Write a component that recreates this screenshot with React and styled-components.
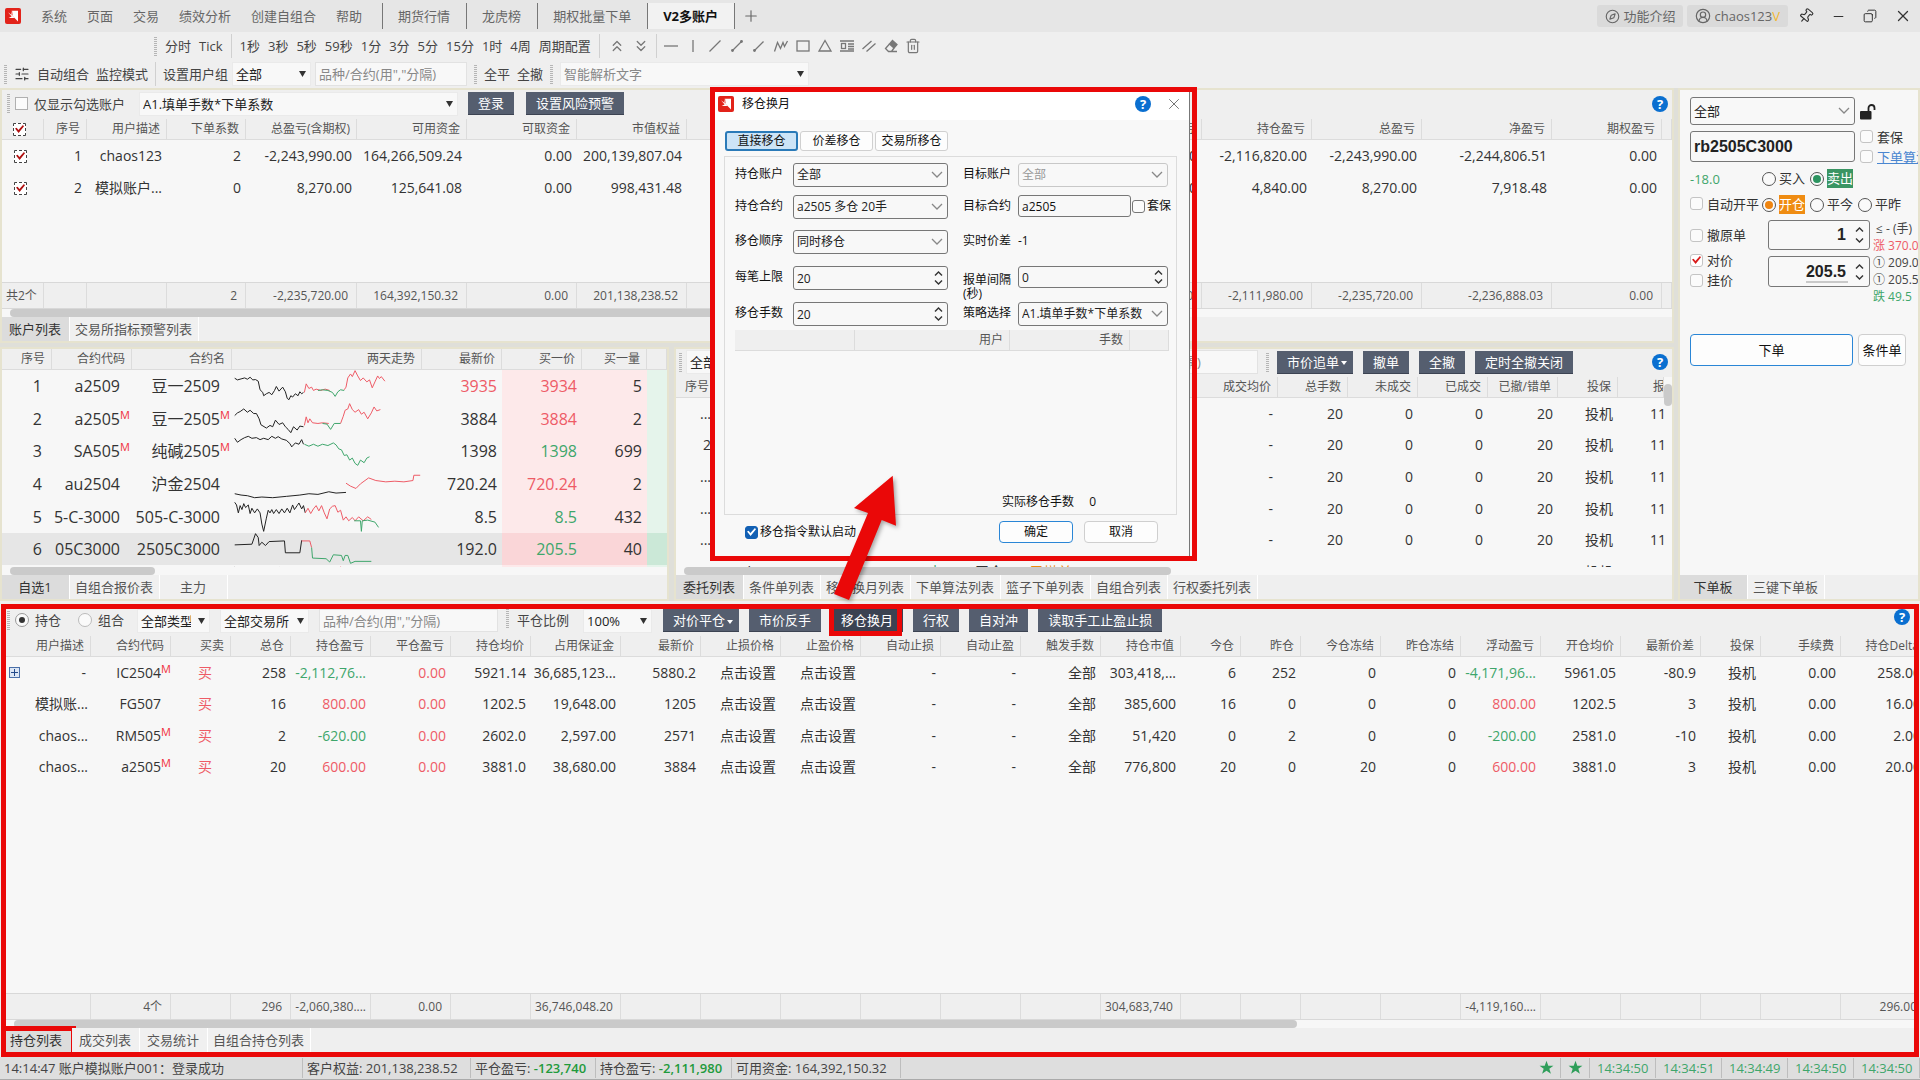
import React from "react";
import styled, { createGlobalStyle, css } from "styled-components";
import { Compass, CircleUserRound, Pin, Minus, Copy, X, Plus, ChevronsUp, ChevronsDown, Trash2, Eraser, SlidersHorizontal } from "lucide-react";

const sans = '"Open Sans", "Noto Sans CJK SC", sans-serif';
const red = "#ea0808";
const up = "#ee5b66";
const down = "#3ea66b";

const Global = createGlobalStyle`
  *, *::before, *::after { box-sizing: border-box; }
  body { margin: 0; background: #efefef; overflow: hidden; }
  button, input, select { font: inherit; color: inherit; margin: 0; }
`;

const App_ = styled.div`
  display: flex;
  flex-direction: column;
  height: 100vh;
  position: relative;
  overflow: hidden;
  font: 13px/18px ${sans};
  color: #444;
  background: #efefef;
`;

/* ---------- title bar and tool bars ---------- */
const TitleBar = styled.header`
  display: flex;
  align-items: center;
  height: 32px;
  flex: none;
  padding: 0 8px 0 5px;
  background: #e6e6e6;
  color: #666;
  white-space: nowrap;
`;
const Menu = styled.nav`
  display: flex;
  gap: 20px;
  margin: 0 20px 0 20px;
`;
const PlainButton = styled.button`
  display: inline-flex;
  align-items: center;
  border: 0;
  padding: 0;
  background: none;
  white-space: nowrap;
`;
const PageTab = styled.button`
  height: 26px;
  border: 0;
  border-left: 1px solid #777;
  padding: 0 16px 0 15px;
  background: ${(p) => (p.$active ? "#f2f2f2" : "none")};
  color: ${(p) => (p.$active ? "#111" : "#666")};
  font-weight: ${(p) => (p.$active ? 700 : 400)};
  ${(p) => p.$active && "border-right: 1px solid #777;"}
`;
const Spacer = styled.div`
  flex: 1;
`;
const Chip = styled.button`
  display: flex;
  align-items: center;
  gap: 3px;
  height: 22px;
  margin-right: 4px;
  padding: 0 8px;
  border: 0;
  border-radius: 3px;
  background: #dadada;
  white-space: nowrap;
  b { color: #f2b630; font-weight: 400; }
`;
const WindowButtons = styled.div`
  display: flex;
  gap: 17px;
  margin-left: 6px;
  color: #333;
`;
const ToolBar = styled.div`
  display: flex;
  align-items: center;
  flex: none;
  height: 28px;
  gap: ${(p) => p.$gap || 8}px;
  padding: 0 4px 0 ${(p) => p.$left || 4}px;
  white-space: nowrap;
`;
const Pair = styled.div`
  display: flex;
  align-items: center;
  gap: ${(p) => p.$gap}px;
`;
const Grip = styled.i`
  width: 3px;
  height: 19px;
  flex: none;
  background: repeating-linear-gradient(#b5b5b5 0 1px, transparent 1px 2px);
`;
const Rule = styled.i`
  width: 1px;
  height: 24px;
  flex: none;
  background: #d0d0d0;
`;
const DrawIcons = styled.div`
  display: flex;
  gap: 6px;
  color: #777;
  svg { display: block; }
`;

/* ---------- controls ---------- */
const SelectBox = styled.span`
  display: inline-grid;
  align-items: center;
  flex: none;
  width: ${(p) => p.$w}px;
  max-width: 100%;
  height: ${(p) => p.$h || 24}px;
  color: ${(p) => (p.$off ? "#999" : "#222")};
  select, svg { grid-area: 1 / 1; }
  svg { justify-self: end; margin-right: 5px; pointer-events: none; }
  select {
    appearance: none;
    width: 100%;
    height: 100%;
    padding: 0 18px 0 3px;
    border: 1px solid ${(p) => (p.$form ? (p.$off ? "#c8c8c8" : "#777") : "#eaeaea")};
    border-radius: ${(p) => (p.$form ? 3 : 0)}px;
    background: #f8f8f8;
    color: ${(p) => (p.$faint ? "#888" : "inherit")};
    opacity: 1;
  }
`;
function Select({ label, value, w, h, form, off, faint }) {
  return (
    <SelectBox $w={w} $h={h} $form={form} $off={off} $faint={faint}>
      <select aria-label={label} disabled={off} defaultValue={value}>
        <option>{value}</option>
      </select>
      {form ? (
        <svg width="12" height="8" viewBox="0 0 12 8" fill="none" stroke="#888" strokeWidth="1.3"><path d="M1 1l5 5 5-5" /></svg>
      ) : (
        <svg width="7" height="6" viewBox="0 0 7 6" fill="#333"><path d="M0 0h7L3.5 6z" /></svg>
      )}
    </SelectBox>
  );
}
const TextInput = styled.input`
  width: ${(p) => p.$w}px;
  height: ${(p) => p.$h || 24}px;
  flex: none;
  padding: 0 3px;
  border: 1px solid ${(p) => (p.$form ? "#777" : "#e2e2e2")};
  border-radius: ${(p) => (p.$form ? 3 : 0)}px;
  background: #f8f8f8;
  outline: 0;
  &::placeholder { color: #888; opacity: 1; }
`;
const FilterInput = styled(TextInput)`
  padding-right: 56px;
  text-align: right;
`;
const BigInput = styled(TextInput)`
  color: #222;
  font: bold 16px/20px "Liberation Sans", sans-serif;
`;
const Label = styled.label`
  display: inline-flex;
  align-items: center;
  gap: ${(p) => p.$gap || 4}px;
  white-space: nowrap;
`;
const Box = styled.input.attrs({ type: "checkbox" })`
  appearance: none;
  display: grid;
  place-items: center;
  flex: none;
  width: 13px;
  height: 13px;
  border: 1px solid ${(p) => p.$edge || "#c4c4c4"};
  border-radius: ${(p) => (p.$square ? 0 : 3)}px;
  background: #fbfbfb;
  &:checked { background: ${(p) => p.$fill || "#fff"}; }
  &:checked::before {
    content: "";
    width: 9px;
    height: 9px;
    background: ${(p) => p.$tick || "#d91c1c"};
    clip-path: polygon(0 45%, 18% 35%, 38% 62%, 88% 5%, 100% 20%, 40% 95%);
  }
`;
const GridBox = styled(Box)`
  margin: 0 auto;
  border: 1px dashed #444;
  border-radius: 1px;
  &:checked::before { background: #b01010; }
`;
const Radio = styled.input.attrs({ type: "radio" })`
  appearance: none;
  display: grid;
  place-items: center;
  flex: none;
  width: 14px;
  height: 14px;
  border: 1px solid ${(p) => p.$edge || "#555"};
  border-radius: 50%;
  background: #fafafa;
  &:checked::before {
    content: "";
    width: ${(p) => p.$dot || 8}px;
    height: ${(p) => p.$dot || 8}px;
    border-radius: 50%;
    background: ${(p) => p.$c || "#333"};
  }
`;
const DarkButton = styled.button`
  position: relative;
  height: 23px;
  flex: none;
  padding: 0 ${(p) => (p.$menu ? 6 : 10)}px 0 10px;
  border: 0;
  border-bottom: 1px solid #3c4352;
  background: ${(p) => (p.$on ? "#3b4252" : "#555e6f")};
  color: #fff;
  line-height: 20px;
  white-space: nowrap;
  svg { margin-left: 2px; vertical-align: middle; }
  & + & { margin-left: 2px; }
`;
const Caret = () => (
  <svg width="6" height="4" viewBox="0 0 6 4" fill="#fff"><path d="M0 0h6L3 4z" /></svg>
);
const HelpButton = styled.button`
  width: 16px;
  height: 16px;
  flex: none;
  border: 0;
  border-radius: 50%;
  padding: 0;
  background: #0a6fd0;
  color: #fff;
  font: bold 13px/16px ${sans};
`;
const Help = () => <HelpButton aria-label="help">?</HelpButton>;

const SpinBox = styled.span`
  display: inline-grid;
  align-items: center;
  width: ${(p) => p.$w}px;
  height: ${(p) => p.$h}px;
  input, svg { grid-area: 1 / 1; }
  svg { justify-self: end; margin-right: ${(p) => (p.$big ? 6 : 5)}px; }
  input {
    appearance: textfield;
    width: 100%;
    height: 100%;
    border: 1px solid #777;
    border-radius: 3px;
    background: #f8f8f8;
    padding: 0 3px;
    color: #222;
    outline: 0;
  }
  input::-webkit-inner-spin-button { display: none; }
  ${(p) => p.$big && css`
    input { padding-right: 23px; text-align: right; font: bold 16px/20px "Liberation Sans", sans-serif; }
  `}
  ${(p) => p.$mark && css`
    input { background: linear-gradient(#c9c9c9, #c9c9c9) 37px 24px / 42px 2px no-repeat #f8f8f8; }
  `}
`;
function Spin({ id, label, value, w, h, big, mark }) {
  const g = big ? 16 : 14;
  return (
    <SpinBox $w={w} $h={h} $big={big} $mark={mark}>
      <input id={id} type="number" step="any" aria-label={label} defaultValue={value} />
      <svg width="9" height={g} viewBox={`0 0 9 ${g}`} fill="none" stroke="#333" strokeWidth="1.4">
        <path d={`M1 4.5l3.5-3.5 3.5 3.5M1 ${g - 4.5}l3.5 3.5 3.5-3.5`} />
      </svg>
    </SpinBox>
  );
}

function Logo({ size }) {
  return (
    <svg width={size} height={size} viewBox="0 0 16 16" aria-hidden="true">
      <rect width="16" height="16" rx="2" fill="#e2231a" />
      <path d="M6.6 2.8H13v10.6L9.6 10 6 6.6z" fill="#fff" />
      <path d="M3 4.2l3 2.4 3.6 3.4H3.6l3-1.4z" fill="#fff" />
      <path d="M6.6 2.8l.6 4.4" stroke="#e2231a" strokeWidth=".8" />
    </svg>
  );
}

/* ---------- panels and tables ---------- */
const Workspace = styled.div`
  display: grid;
  grid-template-columns: minmax(0, 1fr) 242px;
  grid-template-rows: minmax(0, 1fr);
  gap: 4px;
  flex: none;
  height: 513px;
  background: #dfdfd9;
`;
const LeftSide = styled.div`
  display: grid;
  grid-template-columns: minmax(0, 1fr);
  grid-template-rows: 255px minmax(0, 1fr);
  gap: 4px;
  min-width: 0;
`;
const Split = styled.div`
  display: grid;
  grid-template-columns: 669px minmax(0, 1fr);
  grid-template-rows: minmax(0, 1fr);
  gap: 5px;
  min-width: 0;
  min-height: 0;
`;
const Panel = styled.section`
  display: flex;
  flex-direction: column;
  min-width: 0;
  min-height: 0;
  overflow: hidden;
  border: 2px solid #e6e3cf;
  background: #f7f7f7;
`;
const PanelBar = styled(ToolBar)`
  height: ${(p) => p.$h || 28}px;
  padding-bottom: 2px;
  background: #efefef;
`;
const Body = styled.div`
  flex: 1;
  min-height: 0;
  overflow: hidden;
`;
const Table = styled.table`
  width: 100%;
  height: ${(p) => (p.$h ? `${p.$h}px` : "auto")};
  table-layout: fixed;
  border-collapse: separate;
  border-spacing: 0;
  color: #333;
  font-size: ${(p) => p.$size || 14}px;
  line-height: 20px;
`;
const Th = styled.th`
  height: 21px;
  overflow: hidden;
  padding: 0 6px 0 0;
  border-right: 1px solid #dcdcdc;
  border-bottom: 1px solid #dcdcdc;
  background: #efefef;
  color: #555;
  font-size: 12px;
  font-weight: 400;
  line-height: 16px;
  text-align: right;
  white-space: nowrap;
`;
const LeftTh = styled(Th)`
  padding-left: 35px;
  text-align: left;
`;
const Td = styled.td`
  overflow: hidden;
  padding: 0 ${(p) => p.$pad ?? 5}px 0 0;
  background: ${(p) => p.$bg || "none"};
  color: ${(p) => p.$c || "inherit"};
  text-align: ${(p) => p.$align || "right"};
  white-space: nowrap;
`;
const FootTd = styled.td`
  height: 25px;
  padding: 0 ${(p) => (p.$tight ? 4 : 8)}px 0 ${(p) => (p.$tight ? 0 : 4)}px;
  border-right: 1px solid #dcdcdc;
  color: #555;
  font-size: 12px;
  text-align: ${(p) => p.$align || "right"};
  white-space: nowrap;
`;
const Foot = styled.div`
  flex: none;
  overflow: hidden;
  border-top: 1px solid #d8d8d8;
  border-bottom: 1px solid #d8d8d8;
  background: #efefef;
`;
const Cols = ({ widths }) => (
  <colgroup>{widths.map((w, i) => <col key={i} style={w ? { width: w } : undefined} />)}</colgroup>
);
const Clip = styled.div`
  display: flex;
  justify-content: flex-end;
  overflow: hidden;
  span { flex: none; }
`;
const Sup = styled.sup`
  flex: none;
  width: 10px;
  color: #f03040;
  font-size: 11px;
  line-height: 12px;
  text-align: center;
`;
const Code = ({ text, main }) => (
  <Clip><span>{text}</span><Sup>{main ? "M" : ""}</Sup></Clip>
);
const HScroll = styled.div`
  flex: none;
  height: 8px;
  padding-left: 8px;
  &::before {
    content: "";
    display: block;
    width: ${(p) => p.$w};
    height: 100%;
    border-radius: 4px;
    background: #cacaca;
  }
`;
const Tabs = styled.div`
  display: flex;
  flex: none;
  height: 24px;
  background: #efefef;
`;
const Tab = styled.button`
  position: relative;
  min-width: 68px;
  flex: none;
  padding: 0 6px 0 5px;
  border: 0;
  border-right: 1px solid #fff;
  background: ${(p) => (p.$on ? "#dcdcdc" : "#f0f0f0")};
  color: ${(p) => (p.$on ? "#333" : "#555")};
  white-space: nowrap;
`;
const MarkedTab = styled(Tab)`
  min-width: 66px;
  padding-left: 4px;
  text-align: left;
`;
const TabMark = styled.i`
  position: absolute;
  inset: -2px -5px -5px -5px;
  border: 5px solid ${red};
  pointer-events: none;
`;
const ButtonMark = styled.i`
  position: absolute;
  inset: -5px 1px -5px -2px;
  border: 5px solid ${red};
  pointer-events: none;
`;
const TabRow = ({ items, mark }) => (
  <Tabs>
    {items.map((t, i) =>
      mark && i === 0 ? <MarkedTab key={t} $on>{t}<TabMark /></MarkedTab> : <Tab key={t} $on={i === 0}>{t}</Tab>
    )}
  </Tabs>
);

/* ---------- accounts ---------- */
const accCols = [42, 43, 80, 79, 111, 110, 110, 110, 119, 99, 99, 99, 99, 110, 110, 130, 110, null];
const accHead = ["", "序号", "用户描述", "下单系数", "总盈亏(含期权)", "可用资金", "可取资金", "市值权益", "占用保证金", "", "", "", "平仓盈亏", "持仓盈亏", "总盈亏", "净盈亏", "期权盈亏", ""];
const accRows = [
  ["1", "chaos123", "2", "-2,243,990.00", "164,266,509.24", "0.00", "200,139,807.04", "36,685,123.00", "", "", "", "0.00", "-2,116,820.00", "-2,243,990.00", "-2,244,806.51", "0.00", ""],
  ["2", "模拟账户...", "0", "8,270.00", "125,641.08", "0.00", "998,431.48", "", "", "", "", "0.00", "4,840.00", "8,270.00", "7,918.48", "0.00", ""],
];
const accFoot = ["共2个", "", "", "2", "-2,235,720.00", "164,392,150.32", "0.00", "201,138,238.52", "", "", "", "", "0.00", "-2,111,980.00", "-2,235,720.00", "-2,236,888.03", "0.00", ""];

const Gap4 = styled.div`
  margin-right: 4px;
`;
function Accounts() {
  return (
    <Panel>
      <PanelBar $left={5} $gap={10} $h={29}>
        <Gap4>
          <Pair $gap={5}><Grip /><Label $gap={6}><Box $square $edge="#b0b0b0" />仅显示勾选账户</Label></Pair>
        </Gap4>
        <Select label="策略" value="A1.填单手数*下单系数" w={319} />
        <DarkButton>登录</DarkButton>
        <DarkButton>设置风险预警</DarkButton>
        <Spacer />
        <Help />
      </PanelBar>
      <Body>
        <Table $h={85}>
          <Cols widths={accCols} />
          <thead>
            <tr>{accHead.map((h, i) => <Th key={i}>{i === 0 ? <GridBox aria-label="全选" defaultChecked /> : h}</Th>)}</tr>
          </thead>
          <tbody>
            {accRows.map((r) => (
              <tr key={r[0]}>
                <Td><GridBox aria-label={`选择 ${r[1]}`} defaultChecked /></Td>
                {r.map((c, i) => <Td key={i}>{c}</Td>)}
              </tr>
            ))}
          </tbody>
        </Table>
      </Body>
      <Foot>
        <Table>
          <Cols widths={accCols} />
          <tbody><tr>{accFoot.map((c, i) => <FootTd key={i} $align={i === 0 ? "left" : "right"}>{c}</FootTd>)}</tr></tbody>
        </Table>
      </Foot>
      <HScroll $w="1130px" />
      <TabRow items={["账户列表", "交易所指标预警列表"]} />
    </Panel>
  );
}

/* ---------- watch list ---------- */
const K = "#222";
const watchCols = [50, 80, 100, 190, 80, 80, 65, null];
const watchRows = [
  { code: "a2509", name: "豆一2509", last: "3935", lc: up, bid: "3934", bc: up, vol: "5", lines: [
    [K, "6,25 12,30 20,27 28,24 34,28 40,22 46,30 52,29 58,34 62,60 68,68 70,78 76,72 82,68 88,75 94,62 98,50 104,64 112,52 118,66 122,86 126,90 130,78 134,82 140,72 146,78 150,66 154,72 158,68"],
    [up, "160,68 164,42 170,56 176,52 180,62 186,58 196,62 206,58 216,62"], [down, "190,62 200,60 212,62 222,68 228,80 234,66 240,60 248,62"],
    [up, "248,60 252,52 256,24 262,12 266,20 272,2 278,18 284,32 290,24 298,36 304,30 310,54 316,36 322,18 326,26 330,20 338,34"]] },
  { code: "a2505", m: true, name: "豆一2505", last: "3884", bid: "3884", bc: up, vol: "2", lines: [
    [K, "6,38 12,30 18,26 26,18 34,28 40,22 48,32 54,32 60,48 64,66 76,76 84,68 90,72 96,52 104,65 112,60 118,72 124,80 130,90 136,72 144,82 150,70 158,72"],
    [up, "160,68 164,42 168,60 172,48 178,60 190,62 200,60 214,62"], [down, "200,62 210,64 218,80 226,62 240,62"],
    [up, "240,62 246,40 250,22 256,18 260,2 266,20 272,28 280,20 286,34 292,28 300,48 308,30 314,12 320,24 328,20"]] },
  { code: "SA505", m: true, name: "纯碱2505", last: "1398", bid: "1398", bc: down, vol: "699", lines: [
    [K, "6,10 12,22 20,14 28,8 36,4 44,10 54,8 62,14 70,10 80,14 88,4 96,10 102,5 110,12 120,16 128,26 132,36 140,24 148,28 154,14 158,28"],
    [down, "160,28 170,34 180,28 190,34 200,28 212,32 224,24 230,30 236,42 242,45 248,62 254,60 260,76 266,70 272,86 278,92 284,76 292,84 298,70 304,66"]] },
  { code: "au2504", name: "沪金2504", last: "720.24", bid: "720.24", bc: up, vol: "2", lines: [
    [K, "6,78 20,82 34,84 50,90 66,88 90,90 120,86 150,82 170,78 190,80 214,72 230,76 252,74"],
    [up, "252,46 262,55 274,62 284,48 302,30 318,38 340,42 360,40 380,42 400,38 402,22 416,22"]] },
  { code: "5-C-3000", name: "505-C-3000", last: "8.5", bid: "8.5", bc: down, vol: "432", lines: [
    [K, "6,4 10,12 14,36 18,14 22,26 26,8 30,20 36,12 40,38 44,22 50,36 56,24 62,36 66,70 70,92 76,52 80,28 84,36 88,26 92,38 98,26 104,38 110,24 116,36 122,22 128,36 134,12 138,26 144,14 148,6 154,24 158,14 162,36"],
    [up, "162,36 168,22 174,38 180,24 186,14 192,30 198,14 204,36 210,54 216,24 222,16 228,14 234,34 240,28 246,58 252,48 258,60 266,50 272,60 280,48 290,60 300,48 308,56"],
    [down, "270,60 284,60 286,92 288,60 300,58 316,64 324,80"]] },
  { code: "05C3000", name: "2505C3000", last: "192.0", bid: "205.5", bc: down, vol: "40", on: true, lines: [
    [K, "6,36 44,34 48,18 52,2 58,14 60,38 66,28 74,38 82,26 116,24 118,60 150,60 154,22"],
    [up, "154,24 172,24 176,44"], [down, "176,44 178,76 208,78 216,88 224,66 242,68 246,84 250,68 256,68 262,92 272,86 308,86"]] },
  { code: "", name: "", last: "", bid: "", vol: "", lines: [[K, "6,4 8,6"], [K, "106,4 108,6"], [up, "240,2 240,8"]] },
];
const Spark = styled.svg`
  display: block;
  width: 100%;
  height: 32px;
  fill: none;
`;
const WatchRow = styled.tr`
  background: ${(p) => (p.$on ? "#e6e6e6" : "none")};
`;
function WatchList() {
  return (
    <Panel>
      <Body>
        <Table $h={249} $size={16}>
          <Cols widths={watchCols} />
          <thead><tr>{["序号", "合约代码", "合约名", "两天走势", "最新价", "买一价", "买一量", ""].map((h) => <Th key={h}>{h}</Th>)}</tr></thead>
          <tbody>
            {watchRows.map((r, i) => (
              <WatchRow key={i} $on={r.on}>
                <Td $pad={10}>{r.code && i + 1}</Td>
                <Td $pad={2}><Code text={r.code} main={r.m} /></Td>
                <Td $pad={2}><Code text={r.name} main={r.m} /></Td>
                <Td $pad={0}>
                  <Spark viewBox="0 0 420 97" preserveAspectRatio="none">
                    {r.lines.map(([c, pts], k) => <polyline key={k} points={pts} stroke={c} vectorEffect="non-scaling-stroke" />)}
                  </Spark>
                </Td>
                <Td $c={r.lc}>{r.last}</Td>
                <Td $c={r.bc} $bg={r.on ? "#fad6d8" : "#fde9ea"}>{r.bid}</Td>
                <Td $bg={r.on ? "#fad6d8" : "#fde9ea"}>{r.vol}</Td>
                <Td $bg={r.on ? "#cbe8d7" : "#e5f4eb"} />
              </WatchRow>
            ))}
          </tbody>
        </Table>
      </Body>
      <HScroll $w="145px" />
      <TabRow items={["自选1", "自组合报价表", "主力"]} />
    </Panel>
  );
}

/* ---------- orders ---------- */
const orderCols = [40, 92, 82, 60, 58, 72, 88, 110, 70, 70, 70, 70, 60, null];
const orderHead = ["序号", "", "", "", "", "", "", "成交均价", "总手数", "未成交", "已成交", "已撤/错单", "投保", "报单时间"];
const orderTail = ["-", "20", "0", "0", "20", "投机", "11:26:30"];
const orderRows = [
  { n: "..." }, { n: "2" }, { n: "..." }, { n: "..." }, { n: "..." },
  { n: "8", user: "chaos123", code: "a2505", side: "卖", open: "平仓", state: "已撤单", price: "4001" },
];
const OrderArea = styled.div`
  display: flex;
  flex: 1;
  min-height: 0;
`;
const VScroll = styled.div`
  width: 8px;
  padding-top: 7px;
  &::before {
    content: "";
    display: block;
    height: 22px;
    border-radius: 4px;
    background: #cacaca;
  }
`;
const Indent = styled.span`
  padding-left: 32px;
`;
const OrderHelp = styled.div`
  display: flex;
  justify-content: flex-end;
  width: 87px;
`;
function Orders() {
  return (
    <Panel>
      <PanelBar $left={3} $gap={8}>
        <Pair $gap={4}>
          <Grip />
          <Select label="委托筛选" value="全部" w={90} />
        </Pair>
        <Spacer />
        <FilterInput $w={180} aria-label="委托合约筛选" placeholder={'品种/合约(用","分隔)'} />
        <Grip />
        <DarkButton $menu>市价追单<Caret /></DarkButton>
        <DarkButton>撤单</DarkButton>
        <DarkButton>全撤</DarkButton>
        <DarkButton>定时全撤关闭</DarkButton>
        <OrderHelp><Help /></OrderHelp>
      </PanelBar>
      <OrderArea>
        <Body>
          <Table $h={211}>
            <Cols widths={orderCols} />
            <thead><tr>{orderHead.map((h, i) => (i === 13 ? <LeftTh key={i}>{h}</LeftTh> : <Th key={i}>{h}</Th>))}</tr></thead>
            <tbody>
              {orderRows.map((r, i) => (
                <tr key={i}>
                  <Td>{r.n}</Td>
                  <Td>{r.user}</Td>
                  <Td>{r.code}</Td>
                  <Td $c={down} $pad={8}>{r.side}</Td>
                  <Td>{r.open}</Td>
                  <Td $c="#ee8a10" $pad={8}>{r.state}</Td>
                  <Td>{r.price}</Td>
                  {orderTail.map((c, k) => (
                    <Td key={k} $align={k === 6 ? "left" : "right"}>{k === 6 ? <Indent>{c}</Indent> : c}</Td>
                  ))}
                </tr>
              ))}
            </tbody>
          </Table>
        </Body>
        <VScroll />
      </OrderArea>
      <HScroll $w="487px" />
      <TabRow items={["委托列表", "条件单列表", "移仓换月列表", "下单算法列表", "篮子下单列表", "自组合列表", "行权委托列表"]} />
    </Panel>
  );
}

/* ---------- order entry ---------- */
const Entry = styled.form`
  display: flex;
  flex-direction: column;
  flex: 1;
  min-height: 0;
  overflow: hidden;
  padding: 7px 0 0 10px;
  color: #333;
`;
const Line = styled.div`
  display: flex;
  align-items: center;
  flex: none;
  gap: 5px;
  height: ${(p) => (p.$h ? `${p.$h}px` : "auto")};
  margin-bottom: ${(p) => p.$mb ?? 7}px;
  white-space: nowrap;
`;
const Stack = styled.div`
  display: flex;
  flex-direction: column;
  gap: ${(p) => p.$gap || 0}px;
`;
const First = styled.div`
  width: 72px;
  flex: none;
  color: ${(p) => p.$c || "inherit"};
`;
const Option = styled.label`
  display: flex;
  align-items: center;
  gap: 3px;
  width: 48px;
  flex: none;
  span {
    line-height: 19px;
    background: ${(p) => p.$bg || "none"};
    color: ${(p) => (p.$bg ? "#fff" : "inherit")};
  }
`;
const OptionLine = styled(Line)`
  gap: 0;
  height: 19px;
`;
const Grid3 = styled.div`
  display: grid;
  grid-template-columns: 78px 102px minmax(0, 1fr);
  margin-bottom: 29px;
  white-space: nowrap;
`;
const CheckLine = styled(Label)`
  height: ${(p) => p.$h}px;
`;
const Quotes = styled.div`
  padding-left: 3px;
  font-size: 12px;
  line-height: 17px;
  div { color: #444; }
  div:nth-child(2) { color: ${up}; }
  div:nth-child(5) { color: ${down}; }
`;
const FormButton = styled.button`
  width: ${(p) => p.$w}px;
  height: ${(p) => p.$h}px;
  flex: none;
  padding: 0;
  border: 1px solid ${(p) => (p.$main ? "#2a86d6" : "#cfcfcf")};
  border-radius: 4px;
  background: #fdfdfd;
  color: #111;
`;
const Link = styled.a`
  color: #4a86d0;
`;
function OrderEntry() {
  return (
    <Panel>
      <Entry>
        <Line $mb={6}>
          <Select form label="账户" value="全部" w={165} h={28} />
          <svg width="16" height="17" viewBox="0 0 16 17"><rect x="0" y="8" width="11.500" height="8.500" rx="1" fill="#222" /><path d="M8.500 8.500V5a3 3 0 0 1 6 0v2" fill="none" stroke="#222" strokeWidth="1.800" /></svg>
        </Line>
        <Line $h={31}>
          <BigInput $form $w={165} $h={31} aria-label="合约" defaultValue="rb2505C3000" />
          <Stack $gap={2}>
            <Label><Box />套保</Label>
            <Label><Box aria-label="下单算法" /><Link href="#algo">下单算法</Link></Label>
          </Stack>
        </Line>
        <OptionLine>
          <First $c={down}>-18.0</First>
          <Option><Radio name="side" /><span>买入</span></Option>
          <Option $bg="#3a9563"><Radio name="side" $c="#2c9460" defaultChecked /><span>卖出</span></Option>
        </OptionLine>
        <OptionLine $mb={6}>
          <First><Label><Box />自动开平</Label></First>
          <Option $bg="#ef8c12"><Radio name="open" $c="#ef8510" defaultChecked /><span>开仓</span></Option>
          <Option><Radio name="open" /><span>平今</span></Option>
          <Option><Radio name="open" /><span>平昨</span></Option>
        </OptionLine>
        <Grid3>
          <Stack>
            <CheckLine $h={30}><Box />撤原单</CheckLine>
            <CheckLine $h={20}><Box defaultChecked />对价</CheckLine>
            <CheckLine $h={20}><Box />挂价</CheckLine>
          </Stack>
          <Stack $gap={6}>
            <Spin big label="手数" value="1" w={102} h={30} />
            <Spin big mark label="价格" value="205.5" w={102} h={31} />
          </Stack>
          <Quotes>
            <div>&nbsp;≤ - (手)</div>
            <div>涨 370.0</div>
            <div>① 209.0</div>
            <div>① 205.5</div>
            <div>跌 49.5</div>
          </Quotes>
        </Grid3>
        <Line>
          <FormButton type="button" $main $w={163} $h={32}>下单</FormButton>
          <FormButton type="button" $w={48} $h={32}>条件单</FormButton>
        </Line>
      </Entry>
      <TabRow items={["下单板", "三键下单板"]} />
    </Panel>
  );
}

/* ---------- positions ---------- */
const posCols = [85, 80, 60, 60, 80, 80, 80, 90, 80, 80, 80, 80, 80, 80, 80, 60, 60, 80, 80, 80, 80, 80, 60, 80, 85];
const posHead = ["用户描述", "合约代码", "买卖", "总仓", "持仓盈亏", "平仓盈亏", "持仓均价", "占用保证金", "最新价", "止损价格", "止盈价格", "自动止损", "自动止盈", "触发手数", "持仓市值", "今仓", "昨仓", "今仓冻结", "昨仓冻结", "浮动盈亏", "开仓均价", "最新价差", "投保", "手续费", "持仓Delta"];
const posRows = [
  ["-", "IC2504*", "买", "258", "-2,112,76...", "0.00", "5921.14", "36,685,123...", "5880.2", "点击设置", "点击设置", "-", "-", "全部", "303,418,...", "6", "252", "0", "0", "-4,171,96...", "5961.05", "-80.9", "投机", "0.00", "258.00"],
  ["模拟账...", "FG507", "买", "16", "800.00", "0.00", "1202.5", "19,648.00", "1205", "点击设置", "点击设置", "-", "-", "全部", "385,600", "16", "0", "0", "0", "800.00", "1202.5", "3", "投机", "0.00", "16.00"],
  ["chaos...", "RM505*", "买", "2", "-620.00", "0.00", "2602.0", "2,597.00", "2571", "点击设置", "点击设置", "-", "-", "全部", "51,420", "0", "2", "0", "0", "-200.00", "2581.0", "-10", "投机", "0.00", "2.00"],
  ["chaos...", "a2505*", "买", "20", "600.00", "0.00", "3881.0", "38,680.00", "3884", "点击设置", "点击设置", "-", "-", "全部", "776,800", "20", "0", "20", "0", "600.00", "3881.0", "3", "投机", "0.00", "20.00"],
];
const posFoot = ["", "4个", "", "296", "-2,060,380....", "0.00", "", "36,746,048.20", "", "", "", "", "", "", "304,683,740", "", "", "", "", "-4,119,160....", "", "", "", "", "296.00"];
const posPad = { 0: 3, 2: 19 };

const PositionsPanel = styled(Panel)`
  flex: 1;
  margin: 3px 1px 0 1px;
  overflow: visible;
  border: 5px solid ${red};
`;
const PosBar = styled(PanelBar)`
  align-items: flex-start;
  line-height: 22px;
`;
const ModePick = styled(Pair)`
  margin-right: 5px;
`;
const Spaced = styled.div`
  display: flex;
  gap: 10px;
`;
const Expander = styled.button`
  display: grid;
  place-items: center;
  width: 11px;
  height: 11px;
  padding: 0;
  border: 1px solid #4a6fa8;
  background: #dce6f4;
  color: #234a8a;
`;
const ExpandCell = styled.div`
  display: flex;
  align-items: center;
  justify-content: space-between;
  padding-left: 3px;
`;
const RatioLabel = styled.label`
  display: flex;
  gap: 14px;
  margin-right: 3px;
`;
const cellColor = (i, v) => {
  if (i === 2 || i === 5) return up;
  if (i === 4 || i === 19) return v[0] === "-" ? down : up;
  return undefined;
};
function Positions() {
  return (
    <PositionsPanel>
      <PosBar $left={1} $gap={8} $h={27}>
        <ModePick $gap={5}>
          <Grip />
          <Pair $gap={17}>
            <Label $gap={6}><Radio name="pos" $dot={6} $edge="#999" defaultChecked />持仓</Label>
            <Label $gap={6}><Radio name="pos" $edge="#bbb" />组合</Label>
          </Pair>
        </ModePick>
        <Spaced>
          <Select label="类型" value="全部类型" w={73} h={23} />
          <Select label="交易所" value="全部交易所" w={89} h={23} />
          <TextInput $w={179} $h={23} aria-label="持仓合约筛选" placeholder={'品种/合约(用","分隔)'} />
        </Spaced>
        <Grip />
        <RatioLabel>平仓比例<Select label="平仓比例" value="100%" w={69} h={23} /></RatioLabel>
        <DarkButton $menu>对价平仓<Caret /></DarkButton>
        <DarkButton>市价反手</DarkButton>
        <DarkButton $on>移仓换月<ButtonMark /></DarkButton>
        <DarkButton>行权</DarkButton>
        <DarkButton>自对冲</DarkButton>
        <DarkButton>读取手工止盈止损</DarkButton>
        <Spacer />
        <Help />
      </PosBar>
      <Body>
        <Table $h={147}>
          <Cols widths={posCols} />
          <thead><tr>{posHead.map((h) => <Th key={h}>{h}</Th>)}</tr></thead>
          <tbody>
            {posRows.map((r, k) => (
              <tr key={k}>
                {r.map((c, i) => {
                  if (i === 1) return <Td key={i} $pad={0}><Code text={c.replace("*", "")} main={c.endsWith("*")} /></Td>;
                  if (i === 0 && k === 0)
                    return (
                      <Td key={i}>
                        <ExpandCell>
                          <Expander aria-label="展开"><svg width="7" height="7" viewBox="0 0 7 7" stroke="currentColor"><path d="M0 3.500h7M3.500 0v7" /></svg></Expander>
                          {c}
                        </ExpandCell>
                      </Td>
                    );
                  return <Td key={i} $c={cellColor(i, c)} $pad={posPad[i]}>{c}</Td>;
                })}
              </tr>
            ))}
          </tbody>
        </Table>
      </Body>
      <Foot>
        <Table>
          <Cols widths={posCols} />
          <tbody><tr>{posFoot.map((c, i) => <FootTd key={i} $tight={i === 4 || i === 19}>{c}</FootTd>)}</tr></tbody>
        </Table>
      </Foot>
      <HScroll $w="67.500%" />
      <TabRow mark items={["持仓列表", "成交列表", "交易统计", "自组合持仓列表"]} />
    </PositionsPanel>
  );
}

/* ---------- status bar ---------- */
const Status = styled.footer`
  display: flex;
  align-items: center;
  flex: none;
  height: 23px;
  border-bottom: 1px solid #aaa;
  background: #dedede;
  color: #444;
  white-space: nowrap;
`;
const Cell = styled.div`
  width: ${(p) => p.$w}px;
  height: 20px;
  flex: none;
  padding-left: ${(p) => (p.$green ? 7 : 4)}px;
  border-right: 1px solid #bdbdbd;
  color: ${(p) => (p.$green ? down : "inherit")};
  line-height: 20px;
  b { color: #1f9a3c; font-weight: 600; }
  svg { display: block; margin-top: 2px; }
`;
const Star = () => (
  <Cell $w={29} $green>
    <svg width="15" height="15" viewBox="0 0 16 16" fill="#2f9e5a"><path d="M8 .8l1.900 5.200h5.500l-4.400 3.300 1.700 5.400L8 11.400l-4.700 3.300L5 9.300.6 6h5.500z" /></svg>
  </Cell>
);
const times = ["14:34:50", "14:34:51", "14:34:49", "14:34:50", "14:34:50"];

/* ---------- dialog ---------- */
const Dialog = styled.div`
  position: absolute;
  left: 710px;
  top: 87px;
  z-index: 5;
  width: 487px;
  height: 474px;
  padding-right: 2px;
  border: 5px solid ${red};
  color: #111;
  font-size: 12px;
`;
const DialogInner = styled.div`
  height: 100%;
  border-right: 1px solid #777;
  background: #f8f8f8;
`;
const DialogTitle = styled.div`
  display: flex;
  align-items: center;
  height: 28px;
  padding: 0 6px 4px 3px;
  gap: 8px;
  background: #fff;
`;
const CloseButton = styled(PlainButton)`
  margin-left: 6px;
  color: #666;
`;
const ModeRow = styled.div`
  display: flex;
  gap: 2px;
  padding: 11px 0 5px 10px;
`;
const Mode = styled.button`
  width: 73px;
  height: 20px;
  padding: 0;
  border: ${(p) => (p.$on ? "2px solid #2a7ab8" : "1px solid #d0d0d0")};
  border-radius: 3px;
  background: ${(p) => (p.$on ? "#cce4f7" : "#fdfdfd")};
  line-height: 16px;
`;
const Group = styled.div`
  height: 359px;
  margin: 0 12px 0 9px;
  padding: 6px 7px 0 10px;
  border: 1px solid #dcdcdc;
`;
const Fields = styled.div`
  display: grid;
  grid-template-columns: 58px 170px 55px minmax(0, 1fr);
  grid-template-rows: 32px 35px 36px 36px 28px;
  align-items: start;
  label, span { line-height: 22px; }
`;
const Tall = styled.label`
  && { line-height: 14px; padding-top: 7px; }
`;
const Inline = styled.div`
  display: flex;
  align-items: center;
  gap: 1px;
  white-space: nowrap;
`;
const Real = styled.div`
  display: flex;
  gap: 15px;
  justify-content: flex-end;
  padding: 142px 73px 0 0;
`;
const DialogFoot = styled.div`
  display: flex;
  align-items: center;
  gap: 11px;
  padding: 6px 31px 0 30px;
`;
const Arrow = styled.svg`
  position: absolute;
  left: 826px;
  top: 470px;
  z-index: 6;
  filter: drop-shadow(2px 2px 2px #0005);
  pointer-events: none;
`;
function RollDialog() {
  return (
    <Dialog role="dialog" aria-label="移仓换月">
      <DialogInner>
        <DialogTitle>
          <Logo size={16} />移仓换月<Spacer /><Help />
          <CloseButton aria-label="关闭"><X size={18} strokeWidth={1.2} /></CloseButton>
        </DialogTitle>
        <ModeRow><Mode $on>直接移仓</Mode><Mode>价差移仓</Mode><Mode>交易所移仓</Mode></ModeRow>
        <Group>
          <Fields>
            <span>持仓账户</span><Select form label="持仓账户" value="全部" w={155} h={22} />
            <span>目标账户</span><Select form off label="目标账户" value="全部" w={150} h={22} />
            <span>持仓合约</span><Select form label="持仓合约" value="a2505 多仓 20手" w={155} h={22} />
            <label htmlFor="target">目标合约</label>
            <Inline><TextInput id="target" $form $w={113} $h={22} defaultValue="a2505" /><Label $gap={2}><Box $edge="#777" />套保</Label></Inline>
            <span>移仓顺序</span><Select form label="移仓顺序" value="同时移仓" w={155} h={22} />
            <span>实时价差</span><span>-1</span>
            <label htmlFor="limit">每笔上限</label><Spin id="limit" value="20" w={155} h={24} />
            <Tall htmlFor="gap">报单间隔<br />(秒)</Tall><Spin id="gap" value="0" w={150} h={22} />
            <label htmlFor="lots">移仓手数</label><Spin id="lots" value="20" w={155} h={24} />
            <span>策略选择</span><Select form label="策略选择" value="A1.填单手数*下单系数" w={150} h={22} />
          </Fields>
          <Table>
            <Cols widths={[120, 155, 120, null]} />
            <thead><tr><Th /><Th>用户</Th><Th>手数</Th><Th /></tr></thead>
          </Table>
          <Real><span>实际移仓手数</span><span>0</span></Real>
        </Group>
        <DialogFoot>
          <Label $gap={2}><Box defaultChecked $fill="#1260b4" $edge="#1260b4" $tick="#fff" />移仓指令默认启动</Label>
          <Spacer />
          <FormButton $main $w={74} $h={22}>确定</FormButton>
          <FormButton $w={74} $h={22}>取消</FormButton>
        </DialogFoot>
      </DialogInner>
    </Dialog>
  );
}

const G = ({ children }) => (
  <svg width="16" height="16" viewBox="0 0 16 16" fill="none" stroke="currentColor" strokeWidth="1.300">{children}</svg>
);
const AddTab = styled(PlainButton)`
  margin-left: 7px;
`;
const TiltedPin = styled(Pin)`
  rotate: 40deg;
`;
const RestoreIcon = styled(Copy)`
  rotate: 90deg;
`;

export default function App() {
  return (
    <App_>
      <Global />
      <TitleBar>
        <Logo size={16} />
        <Menu>{["系统", "页面", "交易", "绩效分析", "创建自组合", "帮助"].map((t) => <PlainButton key={t}>{t}</PlainButton>)}</Menu>
        <PageTab>期货行情</PageTab>
        <PageTab>龙虎榜</PageTab>
        <PageTab>期权批量下单</PageTab>
        <PageTab $active>V2多账户</PageTab>
        <AddTab aria-label="新建页面"><Plus size={18} strokeWidth={1.5} /></AddTab>
        <Spacer />
        <Chip><Compass size={15} strokeWidth={1.8} />功能介绍</Chip>
        <Chip><CircleUserRound size={16} strokeWidth={1.8} /><span>chaos123<b>V</b></span></Chip>
        <WindowButtons>
          <PlainButton aria-label="置顶"><TiltedPin size={16} strokeWidth={1.7} /></PlainButton>
          <PlainButton aria-label="最小化"><Minus size={15} strokeWidth={1.7} /></PlainButton>
          <PlainButton aria-label="还原"><RestoreIcon size={14} strokeWidth={1.7} /></PlainButton>
          <PlainButton aria-label="关闭窗口"><X size={18} strokeWidth={1.7} /></PlainButton>
        </WindowButtons>
      </TitleBar>
      <ToolBar $left={154} $gap={8}>
        <Grip />
        <PlainButton>分时</PlainButton>
        <PlainButton>Tick</PlainButton>
        <Rule />
        {["1秒", "3秒", "5秒", "59秒", "1分", "3分", "5分", "15分", "1时", "4周", "周期配置"].map((t) => <PlainButton key={t}>{t}</PlainButton>)}
        <Rule />
        <Pair $gap={6}>
          <DrawIcons><ChevronsUp size={18} strokeWidth={1.7} /><ChevronsDown size={18} strokeWidth={1.7} /></DrawIcons>
          <Rule />
          <DrawIcons>
            <G><path d="M1 8h14" /></G>
            <G><path d="M8 2v12" /></G>
            <G><path d="M2.500 13.500l11-11" /></G>
            <G><path d="M3.500 12.500l9-9" /><circle cx="3.500" cy="12.500" r=".8" fill="currentColor" /><circle cx="12.500" cy="3.500" r=".8" fill="currentColor" /></G>
            <G><path d="M3.500 12.500l9-9" /><circle cx="3.500" cy="12.500" r=".8" fill="currentColor" /></G>
            <G><path d="M1.500 13.500l3-9 3 6 2.500-6 1.500 4 3-5.500" /></G>
            <G><rect x="2" y="3" width="12" height="10" /></G>
            <G><path d="M8 2.500l6 10.500H2z" /></G>
            <G><path d="M1 3h14M9 6h6M9 8.500h6M1 13h14M9 11h6" /><rect x="2.500" y="5.500" width="4" height="5" /></G>
            <G><path d="M1.500 11l9-8M5.500 13.500l9-8" /></G>
            <G><path d="M9.500 2.500l4.500 4-3 3.500-4.500-4z" fill="currentColor" /><path d="M6.500 6l-4 4.500 3 3h3l2.500-3.500M6 13.500h8" /></G>
            <Trash2 size={16} strokeWidth={1.8} />
          </DrawIcons>
        </Pair>
      </ToolBar>
      <ToolBar $left={4} $gap={7}>
        <Grip />
        <SlidersHorizontal size={16} strokeWidth={1.8} />
        <PlainButton>自动组合</PlainButton>
        <PlainButton>监控模式</PlainButton>
        <Rule />
        <Pair $gap={4}>
          <PlainButton>设置用户组</PlainButton>
          <Select label="用户组" value="全部" w={79} />
          <TextInput $w={152} aria-label="品种合约" placeholder={'品种/合约(用","分隔)'} />
        </Pair>
        <Grip />
        <PlainButton>全平</PlainButton>
        <PlainButton>全撤</PlainButton>
        <Grip />
        <Select faint label="智能解析" value="智能解析文字" w={249} />
      </ToolBar>
      <Workspace>
        <LeftSide>
          <Accounts />
          <Split>
            <WatchList />
            <Orders />
          </Split>
        </LeftSide>
        <OrderEntry />
      </Workspace>
      <Positions />
      <Status>
        <Cell $w={303}>14:14:47 账户模拟账户001：登录成功</Cell>
        <Cell $w={168}>客户权益: 201,138,238.52</Cell>
        <Cell $w={125}>平仓盈亏: <b>-123,740</b></Cell>
        <Cell $w={136}>持仓盈亏: <b>-2,111,980</b></Cell>
        <Cell $w={169}>可用资金: 164,392,150.32</Cell>
        <Spacer />
        <Star />
        <Star />
        {times.map((t, i) => <Cell key={i} $w={66} $green>{t}</Cell>)}
      </Status>
      <RollDialog />
      <Arrow width="80" height="136" viewBox="826 470 80 136" fill={red}>
        <path d="M892.700 475.700L896 525.700L881.700 520L849 600L834 594L868 513L854 508z" />
      </Arrow>
    </App_>
  );
}
